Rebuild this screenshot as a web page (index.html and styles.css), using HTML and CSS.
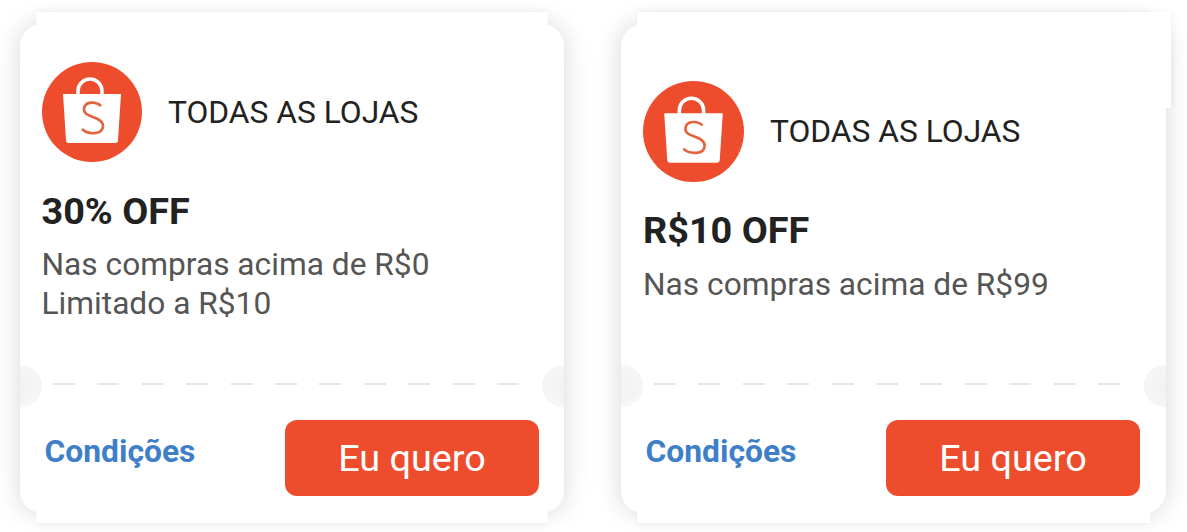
FILE: index.html
```html
<!DOCTYPE html>
<html>
<head>
  <title>Cupons</title>
  <link rel="stylesheet" href="styles.css">
</head>
<body>
  <div class="coupons">
    <div class="coupon">
      <span class="notch notch-left"></span>
      <span class="notch notch-right"></span>
      <div class="coupon-main">
        <div class="store">
          <svg class="store-logo" viewBox="0 0 100 100">
            <circle cx="50" cy="50" r="50" fill="#ee4d2d"/>
            <path d="M36 33v-4a12 12 0 0 1 24 0v4" fill="none" stroke="#fff" stroke-width="3.5"/>
            <path d="M21 32h58l-3 46a3 3 0 0 1-3 3H27a3 3 0 0 1-3-3z" fill="#fff"/>
            <path d="M59 44c-4-4-16-6-17 3c-1 9 19 7 19 17c0 9-15 9-21 3" fill="none" stroke="#e2633f" stroke-width="2.6"/>
          </svg>
          <span class="store-name">TODAS AS LOJAS</span>
        </div>
        <h2 class="discount">30% OFF</h2>
        <p class="terms">Nas compras acima de R$0<br>Limitado a R$10</p>
      </div>
      <div class="dashes"></div>
      <div class="coupon-footer">
        <a class="conditions">Condições</a>
        <button class="claim">Eu quero</button>
      </div>
    </div>

    <div class="coupon coupon-second">
      <span class="top-patch"></span>
      <span class="notch notch-left"></span>
      <span class="notch notch-right"></span>
      <div class="coupon-main">
        <div class="store">
          <svg class="store-logo" viewBox="0 0 100 100">
            <circle cx="50" cy="50" r="50" fill="#ee4d2d"/>
            <path d="M36 33v-4a12 12 0 0 1 24 0v4" fill="none" stroke="#fff" stroke-width="3.5"/>
            <path d="M21 32h58l-3 46a3 3 0 0 1-3 3H27a3 3 0 0 1-3-3z" fill="#fff"/>
            <path d="M59 44c-4-4-16-6-17 3c-1 9 19 7 19 17c0 9-15 9-21 3" fill="none" stroke="#e2633f" stroke-width="2.6"/>
          </svg>
          <span class="store-name">TODAS AS LOJAS</span>
        </div>
        <h2 class="discount">R$10 OFF</h2>
        <p class="terms">Nas compras acima de R$99</p>
      </div>
      <div class="dashes"></div>
      <div class="coupon-footer">
        <a class="conditions">Condições</a>
        <button class="claim">Eu quero</button>
      </div>
    </div>
  </div>
</body>
</html>
```

FILE: styles.css
```css
html, body {
  margin: 0;
  height: 100%;
  background: #fff;
  overflow: hidden;
}
body {
  font-family: Roboto, "Liberation Sans", sans-serif;
  padding: 24px 20px 0;
  box-sizing: border-box;
}
.coupons {
  display: flex;
  gap: 57px;
}
.coupon {
  position: relative;
  width: 544px;
  height: 489px;
  background: #fff;
  border-radius: 22px;
  box-shadow: 0 0 26px rgba(0, 0, 0, .16);
  display: flex;
  flex-direction: column;
}
/* the straight strips above and below the rounded corners */
.coupon::before,
.coupon::after {
  content: "";
  position: absolute;
  left: 16px;
  right: 16px;
  background: #fff;
}
.coupon::before {
  top: -12px;
  height: 14px;
  box-shadow: 0 -3px 6px rgba(0, 0, 0, .03);
}
.coupon::after {
  bottom: -10px;
  height: 12px;
  box-shadow: 0 3px 6px rgba(0, 0, 0, .03);
}
.top-patch {
  position: absolute;
  z-index: 1;
  top: -12px;
  left: 16px;
  right: -5px;
  height: 96px;
  background: #fff;
  box-shadow: 3px 0 6px rgba(0, 0, 0, .03);
  clip-path: inset(-8px -8px 0 -8px);
}
/* only the half inside the card shows, the rest melts into the shadow */
.notch {
  position: absolute;
  z-index: 2;
  top: 341px;
  width: 22px;
  height: 42px;
}
.notch-left {
  left: 0;
  border-radius: 0 21px 21px 0;
  background: radial-gradient(circle at 0 50%, #f1f1f1 0, #f6f6f6 65%, #ebebeb 100%);
}
.notch-right {
  right: 0;
  border-radius: 21px 0 0 21px;
  background: radial-gradient(circle at 100% 50%, #f1f1f1 0, #f6f6f6 65%, #ebebeb 100%);
}
.coupon-main {
  position: relative;
  z-index: 3;
  flex: 1;
  padding: 38px 22px 0 21.5px;
}
.coupon-second {
  width: 545px;
}
.coupon-second .coupon-main {
  padding-top: 57px;
  padding-left: 22px;
}
.store {
  display: flex;
  align-items: center;
  gap: 26.5px;
}
.store-logo {
  width: 100px;
  height: 100px;
  flex: none;
}
.store-name {
  font-size: 31.75px;
  color: #222;
}
.coupon-second .store-logo {
  width: 101px;
  height: 101px;
}
.coupon-second .store {
  gap: 26px;
}
.discount {
  margin: 27px 0 0;
  font-size: 37.8px;
  line-height: 44px;
  font-weight: 700;
  color: #222;
}
.coupon-second .discount {
  margin-top: 26px;
}
.terms {
  margin: 12px 0 0;
  font-size: 31.7px;
  line-height: 39px;
  color: #555;
}
.coupon-second .terms {
  margin-top: 13px;
}
.dashes {
  height: 2px;
  margin: 0 43px 0 33px;
  background: repeating-linear-gradient(90deg, #e6e6e6 0 22px, transparent 22px 44.4px);
}
.coupon-footer {
  display: flex;
  justify-content: space-between;
  align-items: flex-start;
  padding: 35px 25px 17px 24.5px;
}
.coupon-second .coupon-footer {
  padding-right: 26px;
}
.conditions {
  margin-top: 14px;
  font-size: 31.8px;
  line-height: 34px;
  font-weight: 700;
  color: #3f7fc8;
}
.claim {
  width: 254px;
  height: 76px;
  border: 0;
  border-radius: 12px;
  background: #ee4d2d;
  color: #fff;
  font-family: inherit;
  font-size: 37.8px;
  padding: 0;
}
```
